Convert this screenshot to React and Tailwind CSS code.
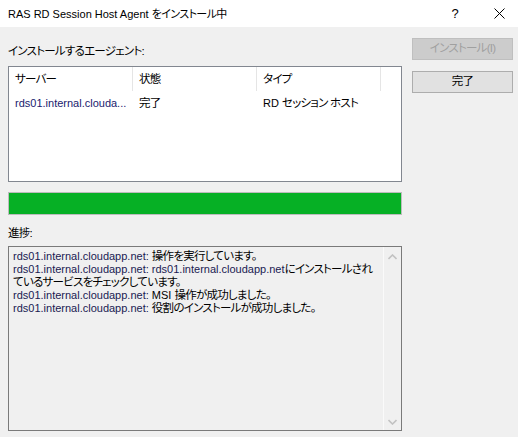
import React from 'react';

// Windows-dialog look: Segoe UI / Meiryo UI stand-ins
const base = "font-['Liberation_Sans','Noto_Sans_CJK_JP',sans-serif] text-[11px] leading-[13px] [font-feature-settings:'palt']";

const J = ({ children, c = 'text-[11.5px] tracking-[-0.75px]' }) => <span className={c}>{children}</span>;
const Host = ({ children }) => <span className="text-[#1a1a52]">{children}</span>;

const LOG = [
    [<Host key="h">rds01.internal.cloudapp.net:</Host>, ' ', <J key="j">操作を実行しています。</J>],
    [<Host key="h">rds01.internal.cloudapp.net:</Host>, ' ', <Host key="h2">rds01.internal.cloudapp.net</Host>, <J key="j">にインストールされ</J>],
    [<J key="j">ているサービスをチェックしています。</J>],
    [<Host key="h">rds01.internal.cloudapp.net:</Host>, ' MSI ', <J key="j">操作が成功しました。</J>],
    [<Host key="h">rds01.internal.cloudapp.net:</Host>, ' ', <J key="j">役割のインストールが成功しました。</J>],
];

function Chevron({ down }) {
    return (
        <svg width="9" height="6" viewBox="0 0 9 6" className="block">
            <path
                d={down ? 'M0.5 1 L4.5 5 L8.5 1' : 'M0.5 5 L4.5 1 L8.5 5'}
                fill="none"
                stroke="#c2c2c2"
                strokeWidth="1.6"
            />
        </svg>
    );
}

export default function App() {
    return (
        <div className={`w-[518px] h-[437px] bg-[#f0f0f0] text-black flex flex-col overflow-hidden ${base}`}>
            {/* Title bar */}
            <div className="h-[27px] bg-white flex items-center pl-[8px] shrink-0">
                <div className="flex-1 text-[11px] pt-px">
                    RAS RD Session Host Agent <J c="text-[11px] tracking-[-0.6px]">をインストール中</J>
                </div>
                <div className="w-[16px] text-center text-[13px] mr-[31px]">?</div>
                <svg width="11" height="11" viewBox="0 0 11 11" className="mr-[13px]">
                    <path d="M0.5 0.5 L10.5 10.5 M10.5 0.5 L0.5 10.5" stroke="#000" strokeWidth="1" />
                </svg>
            </div>

            {/* Body */}
            <div className="flex pl-[8px] pt-[11px]">
                <div className="w-[394px] flex flex-col">
                    <div className="h-[16px] leading-[16px] mt-[5px]">
                        <J>インストールするエージェント:</J>
                    </div>

                    {/* Agent list */}
                    <div className="mt-[7px] h-[116px] border border-[#828790] bg-white">
                        <div className="flex h-[24px] items-center">
                            {['サーバー', '状態', 'タイプ'].map((h) => (
                                <div key={h} className="w-[124px] h-full flex items-center pl-[6px] border-r border-[#e5e5e5]">
                                    <J>{h}</J>
                                </div>
                            ))}
                        </div>
                        <div className="flex h-[22px] items-center pt-[2px]">
                            <div className="w-[124px] pl-[6px] text-[#1a1a6e] whitespace-nowrap">rds01.internal.clouda...</div>
                            <div className="w-[124px] pl-[6px]"><J>完了</J></div>
                            <div className="w-[124px] pl-[6px] whitespace-nowrap">RD <J>セッション ホスト</J></div>
                        </div>
                    </div>

                    {/* Progress */}
                    <div className="mt-[10px] h-[23px] border border-[#bcbcbc] bg-[#e6e6e6]">
                        <div className="h-full w-full bg-[#06b025]" />
                    </div>

                    <div className="h-[16px] leading-[16px] mt-[10px]">
                        <J>進捗:</J>
                    </div>

                    {/* Log box */}
                    <div className="mt-[5px] h-[185px] border border-[#7a7a7a] bg-[#f0f0f0] flex">
                        <div className="flex-1 pl-[4px] pt-[3px] whitespace-nowrap">
                            {LOG.map((line, i) => (
                                <div key={i} className="h-[13px]">{line}</div>
                            ))}
                        </div>
                        <div className="w-[18px] border-l border-[#fafafa] flex flex-col items-center justify-between pt-[7px] pb-[5px]">
                            <Chevron />
                            <Chevron down />
                        </div>
                    </div>
                </div>

                {/* Buttons */}
                <div className="ml-[10px] w-[101px] flex flex-col">
                    <button className="h-[22px] border border-[#bfbfbf] bg-[#cccccc] text-[#a0a0a0] leading-none">
                        <J>インストール(I)</J>
                    </button>
                    <button className="mt-[11px] h-[22px] border border-[#adadad] bg-[#e1e1e1] leading-none">
                        <J>完了</J>
                    </button>
                </div>
            </div>
        </div>
    );
}
